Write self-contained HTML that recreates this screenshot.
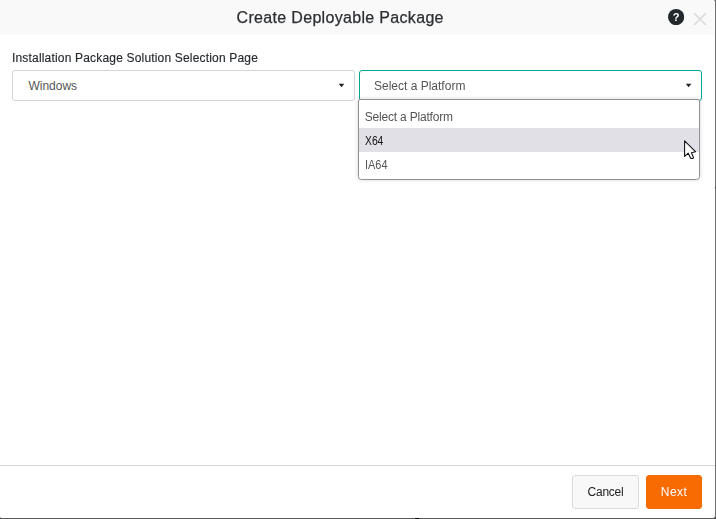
<!DOCTYPE html>
<html>
<head>
<meta charset="utf-8">
<title>Create Deployable Package</title>
<style>
html,body{margin:0;padding:0;}
body{width:716px;height:519px;overflow:hidden;background:#575757;font-family:"Liberation Sans",sans-serif;color:#222;position:relative;}
.edge{position:absolute;left:714px;top:0;width:2px;height:517px;background:#6c6c6c;}
.nick{position:absolute;background:#050505;z-index:3;}
.dialog{position:absolute;left:0;top:0;width:715px;height:518px;background:#fff;border-radius:1px 2px 3px 2px;overflow:hidden;}
.header{position:absolute;left:0;top:0;width:714px;height:35px;background:#f9f9f9;}
.title{position:absolute;left:0;top:8px;width:680.4px;text-align:center;font-size:16px;letter-spacing:0.32px;line-height:20px;color:#2b2f33;white-space:nowrap;}
.help{position:absolute;left:667.8px;top:9.1px;width:16.2px;height:16.2px;will-change:transform;}
.close{position:absolute;left:693px;top:12px;width:14px;height:14px;}
.label{position:absolute;left:12.3px;top:50px;font-size:12px;letter-spacing:0.18px;line-height:16px;color:#252a2e;white-space:nowrap;}
.sel{position:absolute;top:70px;height:31px;box-sizing:border-box;border:1px solid #d3d4d6;border-radius:3px;background:#fff;font-size:12px;color:#555;}
.sel span{position:absolute;left:14.3px;top:7px;line-height:16px;white-space:nowrap;}
#s1 span{left:15.4px;}
.sel svg{position:absolute;right:0;top:0;width:30px;height:29px;}
#s1{left:12px;width:343px;}
#s2{left:359px;width:343px;border-color:#04a598;}
.menu{position:absolute;left:358px;top:99px;width:342px;height:81px;box-sizing:border-box;border:1px solid #919191;border-radius:2px 2px 3.5px 3.5px;background:#fff;font-size:12px;letter-spacing:-0.2px;box-shadow:0 0 4px rgba(0,0,0,.17);}
.opt{position:absolute;left:0;width:340px;height:24px;line-height:26px;padding-left:6.5px;box-sizing:border-box;color:#555;white-space:nowrap;}
.opt.hl{background:#e0e0e6;color:#111;}
.footer{position:absolute;left:0;top:465px;width:715px;height:53px;border-top:1px solid #d8d8d8;background:#fff;}
.btn{position:absolute;top:9px;height:34px;box-sizing:border-box;border-radius:3px;font-size:12px;letter-spacing:-0.25px;line-height:33px;text-align:center;white-space:nowrap;}
.cancel{left:572px;width:67px;border:1px solid #d9d9de;background:#f8f8f8;color:#222;}
.next{left:646px;width:56px;border:1px solid #f26c00;background:#f76b00;color:#fff;letter-spacing:0.4px;}
.title,.label,#s2 span,.btn{will-change:transform;}
.label{-webkit-text-stroke:0.15px #252a2e;}
.title{-webkit-text-stroke:0.25px #2b2f33;}
.cursor{position:absolute;left:683px;top:139px;width:14px;height:21px;}
</style>
</head>
<body>
<div class="edge"></div>
<div class="nick" style="left:415px;top:518px;width:3.5px;height:1px"></div>
<div class="nick" style="left:715px;top:186.5px;width:1px;height:1.5px;background:#333"></div>
<div class="dialog">
  <div class="header">
    <div class="title">Create Deployable Package</div>
    <svg class="help" viewBox="0 0 16 16"><circle cx="8" cy="8" r="8" fill="#22282c"/><text x="8.1" y="12.3" text-anchor="middle" font-family="Liberation Sans, sans-serif" font-weight="bold" font-size="11" fill="#fff">?</text></svg>
    <svg class="close" viewBox="0 0 14 14"><path d="M1.3 1.4 L12.8 12.9 M12.8 1.4 L1.3 12.9" stroke="#dcdcdc" stroke-width="1.7" fill="none"/></svg>
  </div>
  <div class="label">Installation Package Solution Selection Page</div>
  <div class="sel" id="s1"><span>Windows</span><svg viewBox="0 0 30 29"><path d="M14.7 12.7 L20.3 12.7 L17.5 16.3 Z" fill="#222"/></svg></div>
  <div class="sel" id="s2"><span>Select a Platform</span><svg viewBox="0 0 30 29"><path d="M14.8 12.7 L20.4 12.7 L17.6 16.3 Z" fill="#222"/></svg></div>
  <div class="menu">
    <div class="opt" style="top:4px;padding-left:5.8px">Select a Platform</div>
    <div class="opt hl" style="top:28px"><span style="display:inline-block;transform:scaleX(0.86);transform-origin:0 50%;letter-spacing:0;margin-left:-0.8px">X64</span></div>
    <div class="opt" style="top:52px"><span style="display:inline-block;transform:scaleX(0.91);transform-origin:0 50%;letter-spacing:0;margin-left:-0.5px">IA64</span></div>
  </div>
  <svg class="cursor" viewBox="0 0 14 21"><path d="M1.6 1.9 L1.6 17.4 L5.2 14.2 L7.8 19.5 L9.9 19.4 Q10.7 19.0 10.4 18.2 L8.4 13.8 L12.5 12.7 Z" fill="#fff" stroke="#14141c" stroke-width="1.1" stroke-linejoin="round"/></svg>
  <div class="footer">
    <div class="btn cancel">Cancel</div>
    <div class="btn next">Next</div>
  </div>
</div>
</body>
</html>
